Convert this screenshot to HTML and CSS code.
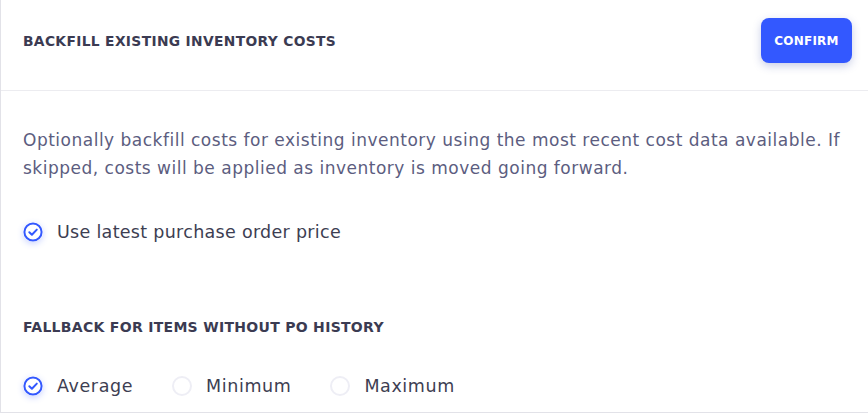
FILE: index.html
```html
<!DOCTYPE html>
<html>
<head>
<meta charset="utf-8">
<link rel="stylesheet" href="styles.css">
</head>
<body>
<div class="panel">
  <header class="header">
    <h1 class="title">BACKFILL EXISTING INVENTORY COSTS</h1>
    <button class="confirm">CONFIRM</button>
  </header>
  <main class="body">
    <p class="desc">Optionally backfill costs for existing inventory using the most recent cost data available. If skipped, costs will be applied as inventory is moved going forward.</p>
    <label class="option first">
      <span class="check on"><svg viewBox="0 0 20 20" width="20" height="20"><circle cx="10" cy="10" r="8.6" fill="none" stroke="#3358ff" stroke-width="2"/><path d="M6.3 10.2 L8.9 12.7 L13.8 7.6" fill="none" stroke="#3358ff" stroke-width="2" stroke-linecap="round" stroke-linejoin="round"/></svg></span>
      <span class="label">Use latest purchase order price</span>
    </label>
    <h2 class="subtitle">FALLBACK FOR ITEMS WITHOUT PO HISTORY</h2>
    <div class="radios">
      <label class="option">
        <span class="check on"><svg viewBox="0 0 20 20" width="20" height="20"><circle cx="10" cy="10" r="8.6" fill="none" stroke="#3358ff" stroke-width="2"/><path d="M6.3 10.2 L8.9 12.7 L13.8 7.6" fill="none" stroke="#3358ff" stroke-width="2" stroke-linecap="round" stroke-linejoin="round"/></svg></span>
        <span class="label">Average</span>
      </label>
      <label class="option">
        <span class="check off"></span>
        <span class="label">Minimum</span>
      </label>
      <label class="option">
        <span class="check off"></span>
        <span class="label">Maximum</span>
      </label>
    </div>
  </main>
</div>
</body>
</html>
```
FILE: styles.css
```css
html, body {
  margin: 0;
  padding: 0;
  background: #ffffff;
}
body {
  font-family: "DejaVu Sans", "Open Sans", sans-serif;
}
.panel {
  width: 868px;
  height: 413px;
  box-sizing: border-box;
  border-left: 1px solid #e2e2e8;
  border-bottom: 1px solid #e2e2e8;
  display: flex;
  flex-direction: column;
}
.header {
  height: 91px;
  box-sizing: border-box;
  border-bottom: 1px solid #ececf0;
  display: flex;
  align-items: center;
  justify-content: space-between;
  padding: 0 16px 9px 22px;
}
.title {
  margin: 0;
  font-size: 13.8px;
  font-weight: 700;
  color: #3b3b52;
  letter-spacing: 0.35px;
}
.confirm {
  width: 91px;
  height: 45px;
  border: none;
  border-radius: 8px;
  background: #3358ff;
  color: #ffffff;
  font-family: inherit;
  font-size: 12px;
  font-weight: 700;
  letter-spacing: 0.2px;
  padding: 0;
  box-shadow: 0 3px 8px rgba(40, 60, 160, 0.25);
}
.body {
  padding: 0 22px;
}
.desc {
  margin: 35px 0 0;
  font-size: 17px;
  line-height: 28px;
  color: #5c5d80;
  letter-spacing: 0.5px;
}
.option {
  display: flex;
  align-items: center;
  gap: 14px;
  font-size: 17.5px;
  color: #3d3e52;
  letter-spacing: 0.3px;
}
.option.first {
  margin-top: 40px;
}
.check {
  width: 20px;
  height: 20px;
  border-radius: 50%;
  flex: none;
  display: block;
}
.check svg {
  display: block;
}
.check.on {
  box-shadow: 0 2px 6px rgba(51, 88, 255, 0.25);
}
.check.off {
  box-sizing: border-box;
  border: 2px solid #eeeef5;
}
.subtitle {
  margin: 77px 0 0;
  font-size: 14px;
  font-weight: 700;
  color: #3b3b52;
  letter-spacing: 0.3px;
}
.radios {
  display: flex;
  gap: 39px;
  margin-top: 41px;
}
.radios .option {
  letter-spacing: 0.6px;
}
```
